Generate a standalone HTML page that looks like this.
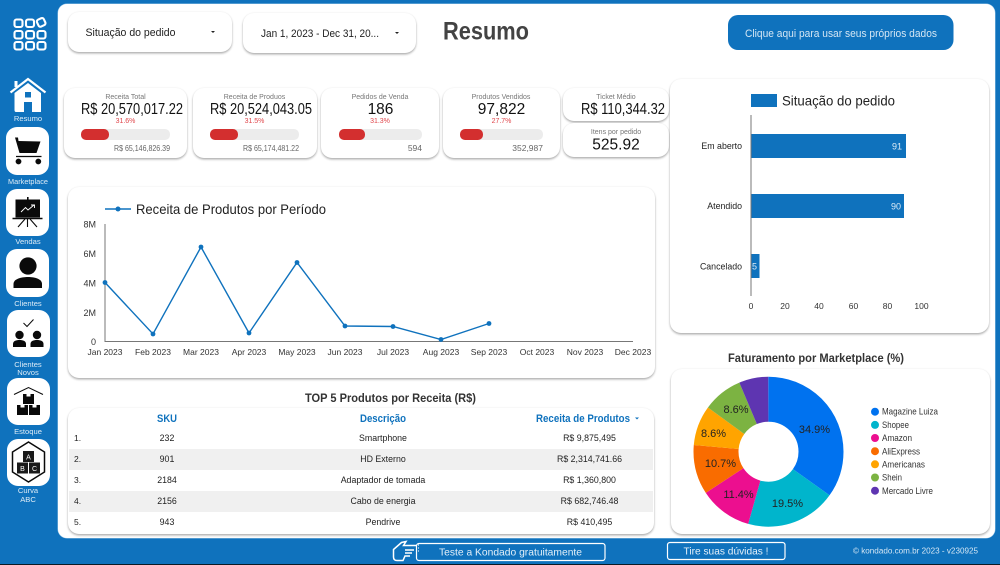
<!DOCTYPE html>
<html lang="pt-BR"><head><meta charset="utf-8"><title>Resumo</title>
<style>
html,body{margin:0;padding:0}
body{width:1000px;height:565px;overflow:hidden;background:#0f72bd;position:relative;font-family:"Liberation Sans",sans-serif}
.p{position:absolute;left:58px;top:4px;width:937px;height:534px;background:#fff;border-radius:9px;box-shadow:0 0 0 .5px #8fc0e4}
.c{position:absolute;background:#fff;border-radius:11px;box-shadow:0 1.5px 2px rgba(0,0,0,.3),0 0 2px rgba(0,0,0,.06)}
.blk{position:absolute;left:0;top:563.500px;width:1000px;height:1.500px;background:#0b1a26}
svg{position:absolute;left:0;top:0}
text{font-family:"Liberation Sans",sans-serif}
</style></head><body>
<div class="p"></div>
<div class="c" style="left:68px;top:12px;width:164px;height:40px"></div>
<div class="c" style="left:243px;top:13px;width:173px;height:40px"></div>
<div class="c" style="left:64px;top:88px;width:123px;height:70px"></div>
<div class="c" style="left:193px;top:88px;width:124px;height:70px"></div>
<div class="c" style="left:321px;top:88px;width:118px;height:70px"></div>
<div class="c" style="left:443px;top:88px;width:117px;height:70px"></div>
<div class="c" style="left:563px;top:88px;width:106px;height:33px"></div>
<div class="c" style="left:563px;top:123px;width:106px;height:34px"></div>
<div class="c" style="left:670px;top:79px;width:319px;height:254px"></div>
<div class="c" style="left:68px;top:187px;width:587px;height:191px"></div>
<div class="c" style="left:68px;top:408px;width:586px;height:126px"></div>
<div class="c" style="left:671px;top:369px;width:319px;height:165px"></div>
<div class="blk"></div>
<svg width="1000" height="565" viewBox="0 0 1000 565">
<!-- Sidebar logo -->
<g fill="none" stroke="#fff" stroke-width="2.100">
<rect x="14.500" y="19.500" width="8" height="7.500" rx="2"/><rect x="26" y="19.500" width="8" height="7.500" rx="2"/><rect x="37.500" y="18.500" width="7.500" height="7.500" rx="2" transform="rotate(-25 41.500 22.500)"/>
<rect x="14.500" y="31" width="8" height="7.500" rx="2"/><rect x="26" y="31" width="8" height="7.500" rx="2"/><rect x="37.500" y="31" width="8" height="7.500" rx="2"/>
<rect x="14.500" y="42" width="8" height="7.500" rx="2"/><rect x="26" y="42" width="8" height="7.500" rx="2"/><rect x="37.500" y="42" width="8" height="7.500" rx="2"/>
</g>
<!-- House -->
<path d="M10.500 92.500 L28 79 L45.500 92.500" fill="none" stroke="#fff" stroke-width="2.200"/>
<rect x="14.500" y="81" width="3" height="6" fill="#fff"/>
<path d="M14.500 93 L28 83 L41 93 V112 H32 V102 H24 V112 H16 Q14.500 112 14.500 110Z" fill="#fff"/>
<rect x="25" y="92" width="6" height="5.500" fill="#0f72bd"/>
<g font-size="7.600" fill="#dcebf6" text-anchor="middle">
<text x="28" y="121">Resumo</text><text x="28" y="184" textLength="40" lengthAdjust="spacingAndGlyphs">Marketplace</text><text x="28" y="244">Vendas</text>
<text x="28" y="306">Clientes</text><text x="28" y="367">Clientes</text><text x="28" y="375">Novos</text>
<text x="28" y="434">Estoque</text><text x="28" y="493">Curva</text><text x="28" y="502">ABC</text></g>
<g fill="#fff">
<rect x="6" y="127" width="43" height="48" rx="11"/><rect x="6" y="189" width="43" height="47" rx="11"/>
<rect x="6" y="249" width="43" height="48" rx="11"/><rect x="7" y="310" width="43" height="47" rx="11"/>
<rect x="7" y="378" width="43" height="47" rx="11"/><rect x="7" y="439" width="43" height="47" rx="11"/></g>
<!-- Cart -->
<path d="M15 137.500 H18 L18.500 141 L40.500 141.500 L36.500 153 H19.500 Z" fill="#0a0a0a"/><path d="M16 156.500 H41.500" stroke="#0a0a0a" stroke-width="1.300"/>
<circle cx="18.500" cy="161.500" r="2.900" fill="#0a0a0a"/><circle cx="38.300" cy="161.500" r="2.900" fill="#0a0a0a"/>
<!-- Board -->
<rect x="15.500" y="199.500" width="24.500" height="18" fill="#0a0a0a"/><rect x="27" y="197" width="1.600" height="3" fill="#0a0a0a"/>
<path d="M21 212 L25.500 207.500 L28 210 L34 205 M31 205 H34.500 V208" fill="none" stroke="#fff" stroke-width=".9"/>
<path d="M12.500 218.500 H42.500" stroke="#0a0a0a" stroke-width="1.500"/>
<path d="M27.500 219 V227 M25 219 L18 227 M30 219 L37 227" stroke="#0a0a0a" stroke-width="1.100"/>
<!-- Person -->
<circle cx="28" cy="266" r="8.600" fill="#0a0a0a"/><path d="M13.500 288 V284 C13.500 279 21 277 28 277 C35 277 42 279 42 284 V288Z" fill="#0a0a0a"/>
<!-- Clients new -->
<path d="M23.500 323 L27 326.500 L33.500 319.500" fill="none" stroke="#0a0a0a" stroke-width="1"/>
<circle cx="19.500" cy="335" r="4.200" fill="#0a0a0a"/><path d="M13 347 V344 C13 341 16 340 19.500 340 C23 340 26 341 26 344 V347Z" fill="#0a0a0a"/>
<circle cx="37" cy="335" r="4.200" fill="#0a0a0a"/><path d="M30.500 347 V344 C30.500 341 33.500 340 37 340 C40.500 340 43.500 341 43.500 344 V347Z" fill="#0a0a0a"/>
<!-- Stock -->
<path d="M14 394.500 L28.500 387.500 L43 394.500" fill="none" stroke="#0a0a0a" stroke-width="1"/>
<path d="M23 394 H26.500 V396.500 H30.500 V394 H34 V404 H23Z M17 405 H20.500 V407.500 H24.500 V405 H28 V415 H17Z M29 405 H32.500 V407.500 H36.500 V405 H40 V415 H29Z" fill="#0a0a0a"/>
<!-- ABC -->
<path d="M28.500 442 L44.500 452 V472 L28.500 482 L12.500 472 V452Z" fill="none" stroke="#0a0a0a" stroke-width="1.500"/>
<rect x="23" y="451" width="11" height="11" fill="#1a1a1a"/><rect x="17" y="462.500" width="11" height="11" fill="#1a1a1a"/><rect x="29" y="462.500" width="11" height="11" fill="#1a1a1a"/>
<g font-size="7" fill="#fff" text-anchor="middle"><text x="28.500" y="459.500">A</text><text x="22.500" y="471">B</text><text x="34.500" y="471">C</text></g>

<!-- Header -->
<text x="85.500" y="36" font-size="11" fill="#222" textLength="90" lengthAdjust="spacingAndGlyphs">Situação do pedido</text>
<path d="M211 31 h4 l-2 2z" fill="#222"/>
<text x="261" y="37" font-size="11" fill="#222" textLength="118" lengthAdjust="spacingAndGlyphs">Jan 1, 2023 - Dec 31, 20...</text>
<path d="M395 32 h4 l-2 2z" fill="#222"/>
<text x="443" y="39.500" font-size="25" font-weight="bold" fill="#434343" textLength="86" lengthAdjust="spacingAndGlyphs">Resumo</text>
<rect x="728" y="15" width="225.500" height="35" rx="10" fill="#0f72bd"/>
<text x="745" y="37" font-size="11" fill="#d4e6f4" textLength="192" lengthAdjust="spacingAndGlyphs">Clique aqui para usar seus próprios dados</text>

<!-- KPI -->
<g text-anchor="middle" font-size="7" fill="#777">
<text x="125.500" y="99">Receita Total</text><text x="254.500" y="99">Receita de Produos</text><text x="380" y="99">Pedidos de Venda</text><text x="501" y="99">Produtos Vendidos</text><text x="616" y="99">Ticket Médio</text><text x="616" y="134">Itens por pedido</text></g>
<g font-size="15.500" fill="#111">
<text x="81" y="114" textLength="102" lengthAdjust="spacingAndGlyphs">R$ 20,570,017.22</text><text x="210" y="114" textLength="102" lengthAdjust="spacingAndGlyphs">R$ 20,524,043.05</text>
<text x="380.500" y="114" text-anchor="middle">186</text><text x="501.500" y="114" text-anchor="middle">97,822</text>
<text x="581" y="114" textLength="84" lengthAdjust="spacingAndGlyphs">R$ 110,344.32</text><text x="616" y="149.500" text-anchor="middle">525.92</text></g>
<g font-size="7" fill="#e0474c" text-anchor="middle"><text x="125.500" y="123">31.6%</text><text x="254.500" y="123">31.5%</text><text x="380" y="123">31.3%</text><text x="501.500" y="123">27.7%</text></g>
<g fill="#ececec"><rect x="81" y="129" width="89" height="11" rx="5"/><rect x="210" y="129" width="89" height="11" rx="5"/><rect x="339" y="129" width="83" height="11" rx="5"/><rect x="460" y="129" width="83" height="11" rx="5"/></g>
<g fill="#d32f2f"><rect x="81" y="129" width="28" height="11" rx="5"/><rect x="210" y="129" width="28" height="11" rx="5"/><rect x="339" y="129" width="26" height="11" rx="5"/><rect x="460" y="129" width="23" height="11" rx="5"/></g>
<g font-size="8.500" fill="#666"><text x="114" y="151" textLength="56" lengthAdjust="spacingAndGlyphs">R$ 65,146,826.39</text><text x="243" y="151" textLength="56" lengthAdjust="spacingAndGlyphs">R$ 65,174,481.22</text><text x="422" y="151" text-anchor="end">594</text><text x="543" y="151" text-anchor="end">352,987</text></g>

<!-- Line chart -->
<path d="M105 209 H131" stroke="#0f72bd" stroke-width="1.500"/><circle cx="118" cy="209" r="2.500" fill="#0f72bd"/>
<text x="136" y="214" font-size="14" fill="#222" textLength="190" lengthAdjust="spacingAndGlyphs">Receita de Produtos por Período</text>
<path d="M105 224 V341.500 H633" fill="none" stroke="#777" stroke-width="1"/>
<g font-size="9" fill="#333" text-anchor="end"><text x="96" y="227.500">8M</text><text x="96" y="257">6M</text><text x="96" y="286.500">4M</text><text x="96" y="316">2M</text><text x="96" y="345">0</text></g>
<g font-size="8.500" fill="#333" text-anchor="middle"><text x="105" y="355">Jan 2023</text><text x="153" y="355">Feb 2023</text><text x="201" y="355">Mar 2023</text><text x="249" y="355">Apr 2023</text><text x="297" y="355">May 2023</text><text x="345" y="355">Jun 2023</text><text x="393" y="355">Jul 2023</text><text x="441" y="355">Aug 2023</text><text x="489" y="355">Sep 2023</text><text x="537" y="355">Oct 2023</text><text x="585" y="355">Nov 2023</text><text x="633" y="355">Dec 2023</text></g>
<polyline points="105,282.500 153,334 201,247 249,333 297,262.500 345,326 393,326.500 441,339.500 489,323.500" fill="none" stroke="#0f72bd" stroke-width="1.400"/>
<g fill="#0f72bd"><circle cx="105" cy="282.500" r="2.400"/><circle cx="153" cy="334" r="2.400"/><circle cx="201" cy="247" r="2.400"/><circle cx="249" cy="333" r="2.400"/><circle cx="297" cy="262.500" r="2.400"/><circle cx="345" cy="326" r="2.400"/><circle cx="393" cy="326.500" r="2.400"/><circle cx="441" cy="339.500" r="2.400"/><circle cx="489" cy="323.500" r="2.400"/></g>

<!-- Bar chart -->
<rect x="751" y="94" width="26" height="13" fill="#0f72bd"/>
<text x="782" y="105.500" font-size="14" fill="#222" textLength="113" lengthAdjust="spacingAndGlyphs">Situação do pedido</text>
<path d="M751 115 V296" stroke="#777" stroke-width="1"/>
<g fill="#0f72bd"><rect x="751.500" y="134" width="154.500" height="24"/><rect x="751.500" y="194" width="152.500" height="24"/><rect x="751.500" y="254" width="8" height="24"/></g>
<g font-size="9" fill="#dcebf6" text-anchor="end"><text x="902" y="149.500">91</text><text x="901" y="209.500">90</text><text x="757" y="269.500">5</text></g>
<g font-size="8.800" fill="#222" text-anchor="end"><text x="742" y="149">Em aberto</text><text x="742" y="209">Atendido</text><text x="742" y="269.500">Cancelado</text></g>
<g font-size="8.500" fill="#333" text-anchor="middle"><text x="751" y="309">0</text><text x="785" y="309">20</text><text x="819" y="309">40</text><text x="853.500" y="309">60</text><text x="887.500" y="309">80</text><text x="921.500" y="309">100</text></g>

<!-- Table -->
<text x="305" y="402" font-size="12" font-weight="bold" fill="#333" textLength="171" lengthAdjust="spacingAndGlyphs">TOP 5 Produtos por Receita (R$)</text>
<rect x="69" y="449" width="584" height="21" fill="#f0f0f0"/><rect x="69" y="491" width="584" height="21" fill="#f0f0f0"/>
<g font-size="11" font-weight="bold" fill="#0f72bd"><text x="157" y="422" textLength="20" lengthAdjust="spacingAndGlyphs">SKU</text><text x="360" y="422" textLength="46" lengthAdjust="spacingAndGlyphs">Descrição</text><text x="536" y="422" textLength="94" lengthAdjust="spacingAndGlyphs">Receita de Produtos</text></g>
<path d="M635 417.500 h4 l-2 2z" fill="#0f72bd"/>
<g font-size="8.500" fill="#222"><text x="74" y="441">1.</text><text x="74" y="462">2.</text><text x="74" y="483">3.</text><text x="74" y="504">4.</text><text x="74" y="525">5.</text></g>
<g font-size="8.800" fill="#222" text-anchor="middle">
<text x="167" y="441">232</text><text x="383" y="441">Smartphone</text><text x="589.500" y="441">R$ 9,875,495</text>
<text x="167" y="462">901</text><text x="383" y="462">HD Externo</text><text x="589.500" y="462">R$ 2,314,741.66</text>
<text x="167" y="483">2184</text><text x="383" y="483">Adaptador de tomada</text><text x="589.500" y="483">R$ 1,360,800</text>
<text x="167" y="504">2156</text><text x="383" y="504">Cabo de energia</text><text x="589.500" y="504">R$ 682,746.48</text>
<text x="167" y="525">943</text><text x="383" y="525">Pendrive</text><text x="589.500" y="525">R$ 410,495</text></g>

<!-- Pie -->
<text x="728" y="362" font-size="12" font-weight="bold" fill="#333" textLength="176" lengthAdjust="spacingAndGlyphs">Faturamento por Marketplace (%)</text>
<g fill="none" stroke-width="45" transform="rotate(-90 768.500 451.700)">
<circle cx="768.500" cy="451.700" r="52.500" pathLength="100" stroke="#0072ef" stroke-dasharray="34.900 65.100" stroke-dashoffset="0"/>
<circle cx="768.500" cy="451.700" r="52.500" pathLength="100" stroke="#00b5cc" stroke-dasharray="19.500 80.500" stroke-dashoffset="-34.900"/>
<circle cx="768.500" cy="451.700" r="52.500" pathLength="100" stroke="#ec0f8f" stroke-dasharray="11.400 88.600" stroke-dashoffset="-54.400"/>
<circle cx="768.500" cy="451.700" r="52.500" pathLength="100" stroke="#f96c00" stroke-dasharray="10.700 89.300" stroke-dashoffset="-65.800"/>
<circle cx="768.500" cy="451.700" r="52.500" pathLength="100" stroke="#ffa400" stroke-dasharray="8.600 91.400" stroke-dashoffset="-76.500"/>
<circle cx="768.500" cy="451.700" r="52.500" pathLength="100" stroke="#7cb342" stroke-dasharray="8.600 91.400" stroke-dashoffset="-85.100"/>
<circle cx="768.500" cy="451.700" r="52.500" pathLength="100" stroke="#5e35b1" stroke-dasharray="6.300 93.700" stroke-dashoffset="-93.700"/>
</g>
<g font-size="11" fill="#222" text-anchor="middle"><text x="814.500" y="433">34.9%</text><text x="787.500" y="507">19.5%</text><text x="738.500" y="498">11.4%</text><text x="720.500" y="467">10.7%</text><text x="713.500" y="437">8.6%</text><text x="736" y="413">8.6%</text></g>
<g><circle cx="875" cy="411.700" r="4" fill="#0072ef"/><circle cx="875" cy="424.900" r="4" fill="#00b5cc"/><circle cx="875" cy="438" r="4" fill="#ec0f8f"/><circle cx="875" cy="451.200" r="4" fill="#f96c00"/><circle cx="875" cy="464.300" r="4" fill="#ffa400"/><circle cx="875" cy="477.500" r="4" fill="#7cb342"/><circle cx="875" cy="490.700" r="4" fill="#5e35b1"/></g>
<g font-size="8.800" fill="#333" lengthAdjust="spacingAndGlyphs"><text x="882" y="414.700" textLength="56" lengthAdjust="spacingAndGlyphs">Magazine Luiza</text><text x="882" y="428" textLength="27" lengthAdjust="spacingAndGlyphs">Shopee</text><text x="882" y="441" textLength="30" lengthAdjust="spacingAndGlyphs">Amazon</text><text x="882" y="454.300" textLength="38" lengthAdjust="spacingAndGlyphs">AliExpress</text><text x="882" y="467.500" textLength="43" lengthAdjust="spacingAndGlyphs">Americanas</text><text x="882" y="480.500" textLength="20" lengthAdjust="spacingAndGlyphs">Shein</text><text x="882" y="493.800" textLength="51" lengthAdjust="spacingAndGlyphs">Mercado Livre</text></g>

<!-- Footer -->
<path d="M393.500 553 V549.500 L401.500 542.500 L406 541.500 L403.500 545.500 H416 M393.500 553 V557 Q393.500 560.500 397 560.500 H403 L405 556 H410 M405 553 H412 M405 550 H414" fill="none" stroke="#fff" stroke-width="1.500"/>
<g fill="#fff"><circle cx="418.500" cy="545" r=".6"/><circle cx="418.500" cy="548" r=".6"/><circle cx="418.500" cy="551" r=".6"/></g>
<rect x="416.500" y="543.500" width="188.500" height="17" rx="2.500" fill="none" stroke="#fff" stroke-width="1.200"/>
<text x="439" y="555.500" font-size="10.500" fill="#e4f0f9" textLength="143" lengthAdjust="spacingAndGlyphs">Teste a Kondado gratuitamente</text>
<rect x="667.500" y="542.500" width="117.500" height="17" rx="2.500" fill="none" stroke="#fff" stroke-width="1.200"/>
<text x="683.500" y="554.500" font-size="10.500" fill="#e4f0f9" textLength="85" lengthAdjust="spacingAndGlyphs">Tire suas dúvidas !</text>
<text x="853" y="553.500" font-size="8" fill="#d4e6f4" textLength="125" lengthAdjust="spacingAndGlyphs">© kondado.com.br 2023 - v230925</text>
</svg>
</body></html>
